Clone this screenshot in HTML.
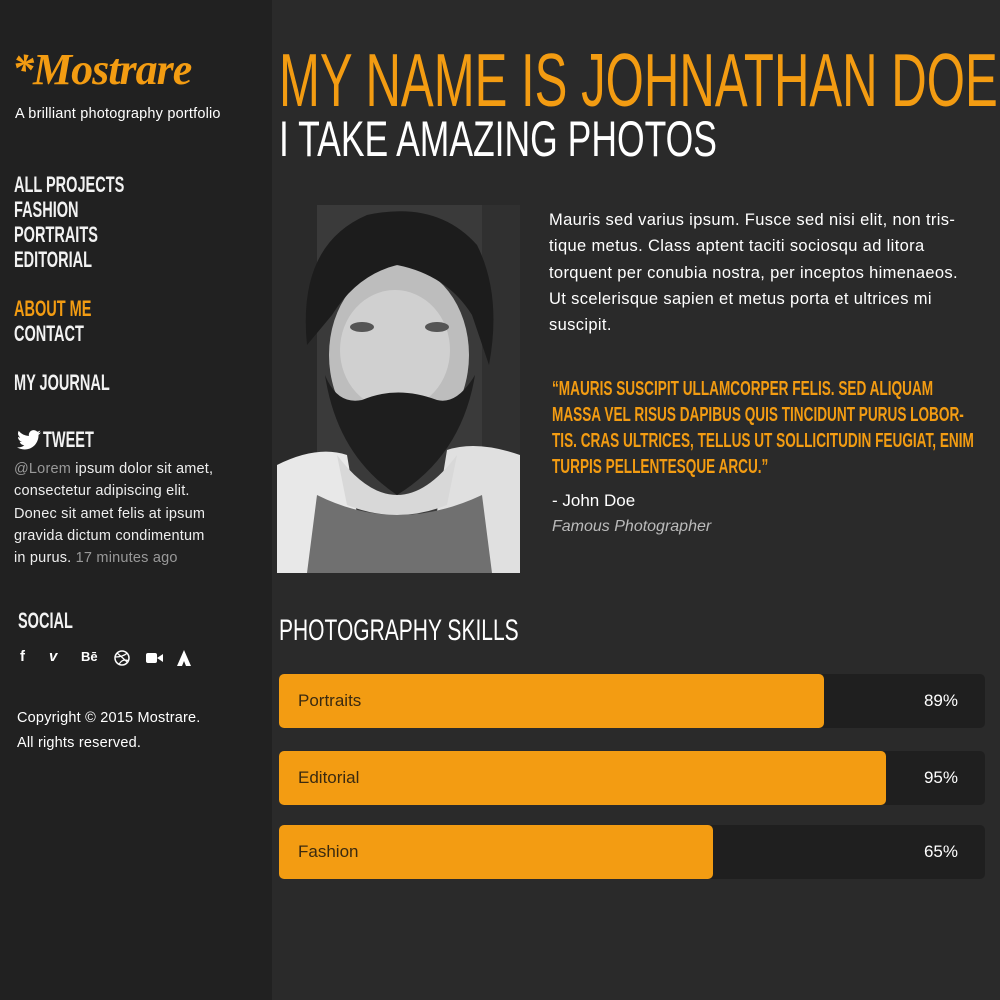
<!DOCTYPE html>
<html><head><meta charset="utf-8"><style>
*{margin:0;padding:0;box-sizing:border-box}
body{width:1000px;height:1000px;background:#2a2a2a;font-family:"Liberation Sans",sans-serif;position:relative;overflow:hidden;color:#eee}
.side{position:absolute;left:0;top:0;width:272px;height:1000px;background:#212121}
.c{font-family:"Liberation Sans Narrow","Liberation Sans",sans-serif;font-weight:bold;text-transform:uppercase;display:inline-block;transform-origin:0 0;white-space:nowrap}
.abs{position:absolute;white-space:nowrap}
.nav{position:absolute;left:14px;font-size:22px;line-height:25px;color:#f2f2f2}
.nav .c{transform:scaleX(.66)}
.p{font-size:14.5px;line-height:22.3px;color:#eee;letter-spacing:.2px}
.bar{position:absolute;left:279px;width:706px;height:54px;background:#1f1f1f;border-radius:5px}
.fill{position:absolute;left:0;top:0;height:54px;background:#f39c12;border-radius:5px;font-size:17px;color:#3a2a10;padding-left:19px;line-height:54px}
.pct{position:absolute;right:27px;top:0;line-height:54px;font-size:17px;color:#fff}
.q{transform:scaleX(.68)}
</style></head><body>
<div class="side"></div>
<div class="abs" style="left:12px;top:44px;font-family:'Liberation Serif',serif;font-style:italic;font-weight:bold;font-size:44px;color:#f39c12;letter-spacing:-1px">*Mostrare</div>
<div class="abs p" style="left:15px;top:103px;color:#fff">A brilliant photography portfolio</div>
<div class="nav" style="top:172px"><span class="c">All Projects</span><br><span class="c">Fashion</span><br><span class="c">Portraits</span><br><span class="c">Editorial</span></div>
<div class="nav" style="top:296px"><span class="c" style="color:#f39c12">About Me</span><br><span class="c">Contact</span></div>
<div class="nav" style="top:370px"><span class="c">My Journal</span></div>
<svg class="abs" style="left:16px;top:430px" width="26" height="20" viewBox="0 0 24 20"><path fill="#fff" d="M24 2.4c-.9.4-1.8.6-2.8.8 1-.6 1.8-1.6 2.2-2.7-1 .6-2 1-3.1 1.2A4.9 4.9 0 0 0 11.9 6 14 14 0 0 1 1.7.9a4.9 4.9 0 0 0 1.5 6.6c-.8 0-1.6-.2-2.2-.6 0 2.4 1.7 4.4 3.9 4.8-.7.2-1.5.2-2.2.1.6 2 2.4 3.4 4.6 3.4A9.9 9.9 0 0 1 0 17.3 14 14 0 0 0 7.5 19.5c9.1 0 14-7.5 14-14v-.6c1-.7 1.8-1.6 2.5-2.5z"/></svg>
<div class="nav" style="left:43px;top:427px"><span class="c">Tweet</span></div>
<div class="abs p" style="left:14px;top:458px"><span style="color:#999">@Lorem</span> ipsum dolor sit amet,<br>consectetur adipiscing elit.<br>Donec sit amet felis at ipsum<br>gravida dictum condimentum<br>in purus. <span style="color:#999">17 minutes ago</span></div>
<div class="nav" style="left:18px;top:608px"><span class="c">Social</span></div>
<div class="abs" style="left:20px;top:648px;font-size:15px;font-weight:bold;color:#fff">
<span style="position:absolute;left:0">f</span><span style="position:absolute;left:29px;font-style:italic">v</span><span style="position:absolute;left:61px;font-size:13px;top:1px">Bē</span>
<svg style="position:absolute;left:94px;top:2px" width="16" height="16"><circle cx="8" cy="8" r="7" fill="none" stroke="#fff" stroke-width="1.5"/><path d="M3 3q6 5 10 9M1.5 7q7 0 12-4M5 14.5q3-6 9-4" fill="none" stroke="#fff" stroke-width="1.2"/></svg>
<svg style="position:absolute;left:126px;top:4px" width="17" height="12"><rect x="0" y="1" width="11" height="10" rx="2" fill="#fff"/><path d="M11 6l6-4v8z" fill="#fff"/></svg>
<svg style="position:absolute;left:157px;top:2px" width="14" height="16"><path d="M7 0L14 16H9L7 11 5 16H0z" fill="#fff"/></svg>
</div>
<div class="abs p" style="left:17px;top:706px;line-height:25px;color:#fff">Copyright © 2015 Mostrare.<br>All rights reserved.</div>

<div class="abs" style="left:279px;top:40px;font-size:75px;color:#f39c12;line-height:80px"><span class="c" style="transform:scaleX(.655);font-weight:normal">My name is Johnathan Doe</span></div>
<div class="abs" style="left:279px;top:112px;font-size:50px;color:#fff;line-height:54px"><span class="c" style="transform:scaleX(.71);font-weight:normal">I take amazing photos</span></div>

<svg class="abs" style="left:277px;top:205px" width="243" height="368" viewBox="0 0 243 368">
<rect width="243" height="368" fill="#3a3a3a"/>
<rect x="0" width="40" height="368" fill="#2a2a2a"/><rect x="205" width="38" height="368" fill="#303030"/>
<path d="M0 260Q40 240 70 250L90 368H0z" fill="#e8e8e8"/>
<path d="M243 250Q200 235 170 245L150 368H243z" fill="#e0e0e0"/>
<path d="M40 290Q120 330 205 290L215 368H30z" fill="#707070"/>
<path d="M60 250Q120 330 180 250L170 300Q120 320 70 300z" fill="#d8d8d8"/>
<ellipse cx="122" cy="150" rx="70" ry="90" fill="#bdbdbd"/>
<ellipse cx="118" cy="145" rx="55" ry="60" fill="#d0d0d0"/>
<path d="M30 140Q20 40 90 10Q160-5 200 40Q225 90 212 160L195 110Q170 70 120 60Q80 70 55 110z" fill="#1c1c1c"/>
<path d="M48 170Q60 250 120 290Q185 250 198 170Q180 200 160 195Q120 180 85 195Q60 200 48 170z" fill="#1e1e1e"/>
<ellipse cx="85" cy="122" rx="12" ry="5" fill="#555"/><ellipse cx="160" cy="122" rx="12" ry="5" fill="#555"/>
</svg>

<div class="abs p" style="left:549px;top:207px;font-size:16.5px;line-height:26.3px;color:#fff;letter-spacing:.35px">Mauris sed varius ipsum. Fusce sed nisi elit, non tris-<br>tique metus. Class aptent taciti sociosqu ad litora<br>torquent per conubia nostra, per inceptos himenaeos.<br>Ut scelerisque sapien et metus porta et ultrices mi<br>suscipit.</div>
<div class="abs" style="left:552px;top:376px;font-size:20px;line-height:26px;color:#f39c12">
<span class="c q">“Mauris suscipit ullamcorper felis. Sed aliquam</span><br>
<span class="c q">massa vel risus dapibus quis tincidunt purus lobor-</span><br>
<span class="c q">tis. Cras ultrices, tellus ut sollicitudin feugiat, enim</span><br>
<span class="c q">turpis pellentesque arcu.”</span></div>
<div class="abs" style="left:552px;top:491px;font-size:17px;color:#fff">- John Doe</div>
<div class="abs" style="left:552px;top:518px;font-size:16px;font-style:italic;color:#bbb">Famous Photographer</div>

<div class="abs" style="left:279px;top:614px;font-size:30px;color:#fff;line-height:34px"><span class="c" style="transform:scaleX(.70);font-weight:normal">Photography Skills</span></div>
<div class="bar" style="top:674px"><div class="fill" style="width:545px">Portraits</div><div class="pct">89%</div></div>
<div class="bar" style="top:751px"><div class="fill" style="width:607px">Editorial</div><div class="pct">95%</div></div>
<div class="bar" style="top:825px"><div class="fill" style="width:434px">Fashion</div><div class="pct">65%</div></div>
</body></html>
